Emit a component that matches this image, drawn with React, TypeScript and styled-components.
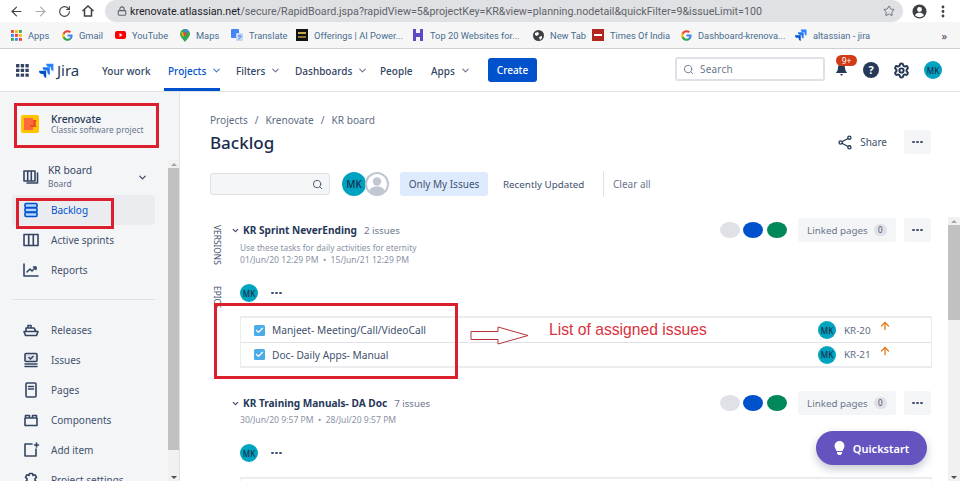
import styled, { createGlobalStyle } from "styled-components"
import { ArrowLeft, ArrowRight, RotateCw, Lock, Star, Search, ChevronDown, ArrowUp, Check, Settings } from "lucide-react"
import type { ReactNode } from "react"

const Global = createGlobalStyle`
  html, body { margin: 0; padding: 0; height: 481px; overflow: hidden; background: #fff; }
  body { font-family: "Noto Sans", "Open Sans", sans-serif; color: #42526e; }
  * { box-sizing: border-box; }
`

const Page = styled.div`
  position: relative;
  width: 960px;
  height: 481px;
  display: flex;
  flex-direction: column;
  overflow: hidden;
`

/* browser chrome */
const Toolbar = styled.div`
  height: 22px;
  display: flex;
  align-items: center;
  background: #fff;
  padding-left: 4px;
  flex: none;
`
const ToolIcon = styled.div<{ $c?: string }>`
  width: 24px;
  display: flex;
  justify-content: center;
  color: ${(p) => p.$c ?? "#3c4043"};
`
const UrlPill = styled.div`
  width: 798px;
  height: 22px;
  margin-left: 5px;
  margin-right: 4px;
  border-radius: 11px;
  background: #e0e1e4;
  display: flex;
  align-items: center;
  padding: 0 8px 0 12px;
  font-family: Roboto, sans-serif;
  font-size: 10.7px;
  color: #5f6368;
  white-space: nowrap;
  gap: 3px;
  span b { font-weight: 400; color: #202124; }
`
const UrlText = styled.span`
  flex: 1;
`
const Bookmarks = styled.div`
  height: 27px;
  flex: none;
  display: flex;
  align-items: center;
  padding-left: 11px;
  background: #f6f6f6;
  border-bottom: 1px solid #cfcfcf;
  position: relative;
`
const Mark = styled.div<{ $w: number }>`
  width: ${(p) => p.$w}px;
  display: flex;
  align-items: center;
  gap: 6px;
  font-family: Roboto, sans-serif;
  font-size: 9.3px;
  color: #476c8e;
  white-space: nowrap;
  flex: none;
  svg { flex: none; }
`
const MoreMarks = styled.div`
  margin-left: auto;
  padding-right: 13px;
  font-size: 11px;
  color: #444;
`

/* jira top nav */
const TopNav = styled.div`
  height: 43px;
  flex: none;
  display: flex;
  align-items: center;
  padding-left: 16px;
  background: #fff;
  border-bottom: 1px solid #dfe1e6;
`
const Brand = styled.div`
  display: flex;
  align-items: center;
  gap: 3px;
  width: 63px;
  margin-left: 10px;
  font-size: 15px;
  color: #253858;
`
const NavItem = styled.div<{ $w: number; $on?: boolean }>`
  width: ${(p) => p.$w}px;
  height: 42px;
  display: flex;
  align-items: center;
  gap: 5px;
  font-size: 10px;
  padding-top: 1px;
  font-weight: 500;
  color: ${(p) => (p.$on ? "#0052cc" : "#344563")};
  position: relative;
  flex: none;
  ${(p) =>
    p.$on &&
    `&::after { content: ""; position: absolute; left: -4px; width: 56px; bottom: 0; height: 3px; background: #0052cc; }`}
`
const CreateBtn = styled.div`
  width: 49px;
  height: 24px;
  background: #0052cc;
  border-radius: 3px;
  color: #fff;
  font-size: 10px;
  font-weight: 500;
  display: flex;
  align-items: center;
  justify-content: center;
`
const GlobalSearch = styled.div`
  width: 150px;
  height: 24px;
  margin-left: auto;
  margin-top: -2px;
  border: 2px solid #dfe1e6;
  border-radius: 3px;
  display: flex;
  align-items: center;
  gap: 6px;
  padding-left: 6px;
  font-size: 10px;
  color: #6b778c;
  letter-spacing: 0.2px;
`
const NavIcons = styled.div`
  width: 135px;
  height: 100%;
  display: flex;
  align-items: center;
  padding-left: 4px;
  gap: 6px;
`
const BellWrap = styled.div`
  position: relative;
  width: 24px;
  height: 24px;
  display: flex;
  align-items: center;
  justify-content: center;
`
const Badge = styled.div`
  position: absolute;
  left: 7px;
  top: -3px;
  width: 21px;
  height: 11px;
  border-radius: 6px;
  background: #d33a17;
  color: #fff;
  font-size: 8.5px;
  line-height: 11px;
  text-align: center;
`
const GearSlot = styled.div`
  width: 24px;
  display: flex;
  justify-content: center;
  color: #253858;
  margin-right: 5px;
`
const Avatar = styled.div<{ $s: number; $f: number }>`
  width: ${(p) => p.$s}px;
  height: ${(p) => p.$s}px;
  border-radius: 50%;
  background: #00a3bf;
  color: #172b4d;
  font-size: ${(p) => p.$f}px;
  font-weight: 500;
  display: flex;
  align-items: center;
  justify-content: center;
  flex: none;
`

/* body */
const Body = styled.div`
  flex: 1;
  display: flex;
  min-height: 0;
`
const Sidebar = styled.aside`
  width: 180px;
  flex: none;
  background: #f4f5f7;
  border-right: 1px solid #dfe1e6;
  padding: 20px 0 0 12px;
  position: relative;
  overflow: hidden;
`
const SideBar = styled.div`
  position: absolute;
  right: 0;
  top: 68px;
  bottom: 0;
  width: 11px;
  background: #f1f1f1;
  display: flex;
  flex-direction: column;
  align-items: center;
`
const ScrollArrow = styled.div<{ $down?: boolean }>`
  width: 100%;
  height: 8px;
  flex: none;
  display: flex;
  align-items: center;
  justify-content: center;
  &::before {
    content: "";
    border-left: 3px solid transparent;
    border-right: 3px solid transparent;
    ${(p) => (p.$down ? "border-top: 3px solid #505050;" : "border-bottom: 3px solid #a3a3a3;")}
  }
`
const Thumb = styled.div<{ $h: number }>`
  width: 100%;
  height: ${(p) => p.$h}px;
  flex: none;
  background: #c1c1c1;
`
const ScrollGap = styled.div`
  flex: 1;
`
const ProjectHead = styled.div`
  display: flex;
  align-items: center;
  gap: 12px;
  padding-left: 9px;
  height: 24px;
`
const ProjectLogo = styled.div`
  width: 18px;
  height: 18px;
  border-radius: 2px;
  background: #ffc400;
  display: flex;
  align-items: center;
  justify-content: center;
`
const ProjectName = styled.div`
  font-size: 10.3px;
  font-weight: 500;
  color: #253858;
  line-height: 12px;
`
const ProjectKind = styled.div`
  font-size: 8.4px;
  color: #6b778c;
  line-height: 10px;
`
const BoardRow = styled.div`
  display: flex;
  align-items: center;
  height: 32px;
  margin-top: 25px;
  padding-left: 10px;
  width: 143px;
  gap: 8px;
`
const BoardText = styled.div`
  flex: 1;
  line-height: 13px;
  font-size: 10.3px;
  color: #344563;
  small { display: block; font-size: 8.4px; color: #5e6c84; }
`
const BoardChevron = styled.div`
  display: flex;
  margin-right: 7px;
  color: #344563;
`
const SideItem = styled.div<{ $on?: boolean }>`
  width: 143px;
  height: 30px;
  display: flex;
  align-items: center;
  gap: 11px;
  padding-left: 10px;
  border-radius: 3px;
  font-size: 10px;
  background: ${(p) => (p.$on ? "#ebecf0" : "transparent")};
  color: ${(p) => (p.$on ? "#0052cc" : "#42526e")};
  svg { flex: none; }
`
const SideList = styled.div`
  margin-top: 2px;
`
const SideRule = styled.div`
  width: 143px;
  height: 1px;
  background: #dfe1e6;
  margin: 14px 0 15px;
`

const Main = styled.main`
  flex: 1;
  min-width: 0;
  padding: 20px 17px 0 30px;
  background: #fff;
  overflow: hidden;
`
const Crumbs = styled.div`
  display: flex;
  gap: 7px;
  font-size: 10.1px;
  color: #5e6c84;
  height: 15px;
  align-items: center;
`
const TitleRow = styled.div`
  display: flex;
  align-items: center;
  height: 30px;
`
const Title = styled.h1`
  margin: 0;
  font-size: 17px;
  font-weight: 500;
  color: #172b4d;
  flex: 1;
`
const ShareBtn = styled.div`
  display: flex;
  align-items: center;
  gap: 8px;
  font-size: 10px;
  color: #42526e;
  margin-right: 17px;
`
const MoreBtn = styled.div`
  width: 27px;
  height: 24px;
  border-radius: 3px;
  background: #f4f5f7;
  display: flex;
  align-items: center;
  justify-content: center;
  gap: 1.5px;
  flex: none;
  i { width: 2.6px; height: 2.6px; border-radius: 50%; background: #42526e; display: block; }
`
const Dots = styled.div`
  display: flex;
  gap: 1.5px;
  margin-left: 13px;
  i { width: 2.6px; height: 2.6px; border-radius: 50%; background: #42526e; display: block; }
`
const FilterRow = styled.div`
  display: flex;
  align-items: center;
  height: 24px;
  margin-top: 15px;
`
const FilterInput = styled.div`
  width: 120px;
  height: 22px;
  background: #f4f5f7;
  border: 1px solid #dfe1e6;
  border-radius: 3px;
  display: flex;
  align-items: center;
  justify-content: flex-end;
  padding-right: 6px;
  color: #42526e;
`
const People = styled.div`
  display: flex;
  margin-left: 12px;
  width: 58px;
`
const GreyPerson = styled.div`
  width: 24px;
  height: 24px;
  margin-left: -1px;
  border-radius: 50%;
  background: #c1c7d0;
  overflow: hidden;
  flex: none;
`
const QuickOn = styled.div`
  width: 88px;
  height: 24px;
  background: #deebff;
  border-radius: 3px;
  font-size: 10px;
  color: #42526e;
  display: flex;
  align-items: center;
  justify-content: center;
`
const QuickOff = styled.div`
  margin-left: 15px;
  font-size: 9.8px;
  color: #42526e;
  width: 100px;
`
const ClearAll = styled.div`
  border-left: 1px solid #dfe1e6;
  height: 26px;
  padding-left: 9px;
  display: flex;
  align-items: center;
  font-size: 10px;
  color: #6b778c;
`
const Sprint = styled.section<{ $top: number }>`
  display: flex;
  margin-top: ${(p) => p.$top}px;
`
const Rail = styled.div`
  width: 20px;
  flex: none;
`
const RailText = styled.div<{ $mt: number }>`
  writing-mode: vertical-rl;
  font-size: 8.4px;
  color: #42526e;
  margin-top: ${(p) => p.$mt}px;
  height: 41px;
  margin-left: 2px;
`
const SprintBody = styled.div`
  flex: 1;
  min-width: 0;
`
const SprintHead = styled.div<{ $t?: number }>`
  display: flex;
  align-items: center;
  height: 24px;
  padding-left: 1px;
  margin-top: ${(p) => p.$t ?? 0}px;
`
const SprintName = styled.div`
  font-size: 10.1px;
  font-weight: 700;
  color: #253858;
  margin-left: 3px;
  white-space: nowrap;
`
const IssueCount = styled.div`
  font-size: 9.7px;
  color: #6b778c;
  margin-left: 7px;
  flex: 1;
`
const Ellipse = styled.div<{ $c: string }>`
  width: 20px;
  height: 16px;
  border-radius: 50%;
  background: ${(p) => p.$c};
  margin-right: 3.5px;
  flex: none;
`
const Linked = styled.div`
  width: 98px;
  height: 24px;
  margin: 0 8px 0 8px;
  background: #f4f5f7;
  border-radius: 3px;
  display: flex;
  align-items: center;
  gap: 6px;
  padding-left: 9px;
  font-size: 9.8px;
  color: #6b778c;
  flex: none;
`
const Count = styled.div`
  width: 13px;
  height: 12px;
  border-radius: 6px;
  background: #dfe1e6;
  font-size: 8px;
  line-height: 12px;
  text-align: center;
  color: #42526e;
`
const SprintMeta = styled.div<{ $t?: number; $s?: number }>`
  font-size: ${(p) => p.$s ?? 8.6}px;
  line-height: 13px;
  color: #8993a4;
  padding-left: 10px;
  margin-top: ${(p) => p.$t ?? 0}px;
  white-space: nowrap;
`
const Assignees = styled.div<{ $t: number }>`
  display: flex;
  align-items: center;
  margin-top: ${(p) => p.$t}px;
  padding-left: 10px;
`
const IssueList = styled.div<{ $t: number }>`
  margin: ${(p) => p.$t}px 0 0 10px;
  width: 692px;
  border: 1px solid #ebecf0;
  border-top-width: 2px;
  border-bottom-width: 2px;
  flex: none;
`
const IssueRow = styled.div`
  height: 24px;
  display: flex;
  align-items: center;
  padding-left: 13px;
  font-size: 10.2px;
  color: #42526e;
  & + & { border-top: 1px solid #dfe1e6; }
`
const CheckBox = styled.div`
  width: 11px;
  height: 11px;
  border-radius: 1.5px;
  background: #4bade8;
  display: flex;
  align-items: center;
  justify-content: center;
  color: #fff;
  margin-right: 7px;
`
const Summary = styled.div`
  flex: 1;
`
const IssueKey = styled.div`
  width: 35px;
  margin-left: 8px;
  font-size: 9.8px;
  color: #5e6c84;
`
const IssueEnd = styled.div`
  width: 52px;
  height: 16px;
  margin-bottom: 4px;
  color: #e07b1a;
`
const MainScroll = styled.div`
  width: 12px;
  flex: none;
  background: #f1f1f1;
  margin-top: 125px;
  display: flex;
  flex-direction: column;
`

/* overlays */
const RedBox = styled.div<{ $x: number; $y: number; $w: number; $h: number }>`
  position: absolute;
  left: ${(p) => p.$x}px;
  top: ${(p) => p.$y}px;
  width: ${(p) => p.$w}px;
  height: ${(p) => p.$h}px;
  border: 3px solid #d9202c;
  pointer-events: none;
`
const Callout = styled.div`
  position: absolute;
  left: 549px;
  top: 320px;
  font-family: "Liberation Sans", Arial, sans-serif;
  font-size: 15.7px;
  line-height: 20px;
  color: #d9323c;
  white-space: nowrap;
`
const CalloutArrow = styled.svg`
  position: absolute;
  left: 470px;
  top: 326px;
`
const Quickstart = styled.div`
  position: absolute;
  left: 816px;
  top: 431px;
  width: 111px;
  height: 34px;
  border-radius: 17px;
  background: #6554c0;
  color: #fff;
  font-size: 11px;
  font-weight: 600;
  display: flex;
  align-items: center;
  justify-content: center;
  gap: 8px;
  box-shadow: 0 4px 8px rgba(9, 30, 66, 0.25);
`

const GoogleG = () => (
  <svg width="11" height="11" viewBox="0 0 24 24">
    <path fill="#4285f4" d="M23 12.3c0-.8-.1-1.6-.2-2.3H12v4.400h6.200a5.300 5.300 0 0 1-2.300 3.500v2.900h3.700c2.200-2 3.400-5 3.400-8.500z" />
    <path fill="#34a853" d="M12 23.500c3.100 0 5.700-1 7.600-2.800l-3.700-2.900c-1 .7-2.300 1.100-3.900 1.100-3 0-5.500-2-6.400-4.700H1.800v3c1.900 3.800 5.800 6.300 10.200 6.300z" />
    <path fill="#fbbc05" d="M5.600 14.200a6.900 6.900 0 0 1 0-4.400v-3H1.800a11.500 11.500 0 0 0 0 10.400z" />
    <path fill="#ea4335" d="M12 5.100c1.700 0 3.200.6 4.400 1.700l3.300-3.300A11.500 11.500 0 0 0 1.800 6.800l3.800 3C6.500 7.100 9 5.100 12 5.100z" />
  </svg>
)

const JiraMark = ({ size }: { size: number }) => (
  <svg width={size} height={size} viewBox="0 0 24 24">
    <path fill="#2684ff" d="M23 1H11.500a5.200 5.200 0 0 0 5.200 5.200h2.100v2a5.200 5.200 0 0 0 4.200 5.100z" />
    <path fill="#1f78f0" d="M17.300 6.700H5.800a5.200 5.200 0 0 0 5.200 5.200h2.100v2a5.200 5.200 0 0 0 4.200 5.100z" />
    <path fill="#0052cc" d="M11.500 12.400H0a5.200 5.200 0 0 0 5.200 5.200h2.100v2a5.200 5.200 0 0 0 4.200 4.400z" />
  </svg>
)

const AppsDots = ({ multi }: { multi?: boolean }) => {
  const colors = ["#ea4335", "#fbbc05", "#34a853", "#4285f4", "#ea4335", "#fbbc05", "#34a853", "#4285f4", "#ea4335"]
  return (
    <svg width={multi ? 11 : 13} height={multi ? 11 : 13} viewBox="0 0 13 13">
      {colors.map((c, i) => (
        <rect key={i} x={(i % 3) * 4.7} y={Math.floor(i / 3) * 4.7} width="3.4" height="3.4" rx={multi ? 0 : 0.6} fill={multi ? c : "#344563"} />
      ))}
    </svg>
  )
}

const Line = ({ children, w = 18, h = 18, c = "#344563" }: { children: ReactNode; w?: number; h?: number; c?: string }) => (
  <svg width={w} height={h} viewBox="0 0 18 18" fill="none" stroke={c} strokeWidth="1.6" strokeLinejoin="round" strokeLinecap="round">
    {children}
  </svg>
)

const nav = [
  { label: "Your work", w: 66 },
  { label: "Projects", w: 68, on: true, chev: true },
  { label: "Filters", w: 59, chev: true },
  { label: "Dashboards", w: 85, chev: true },
  { label: "People", w: 51 },
  { label: "Apps", w: 57, chev: true },
]

const More = () => (
  <MoreBtn>
    <i />
    <i />
    <i />
  </MoreBtn>
)

const SprintRight = () => (
  <>
    <Ellipse $c="#dfe1e6" />
    <Ellipse $c="#0052cc" />
    <Ellipse $c="#00875a" />
    <Linked>
      Linked pages <Count>0</Count>
    </Linked>
    <More />
  </>
)

export default function App() {
  return (
    <Page>
      <Global />
      <Toolbar>
        <ToolIcon><ArrowLeft size={15} strokeWidth={1.8} /></ToolIcon>
        <ToolIcon $c="#a8abaf"><ArrowRight size={15} strokeWidth={1.8} /></ToolIcon>
        <ToolIcon><RotateCw size={13} strokeWidth={2} /></ToolIcon>
        <ToolIcon>
          <svg width="14" height="14" viewBox="0 0 14 14" fill="none" stroke="#3c4043" strokeWidth="1.5">
            <path d="M1.5 7 7 2l5.5 5M3.5 6v6h7V6" />
          </svg>
        </ToolIcon>
        <UrlPill>
          <Lock size={10} strokeWidth={2.6} />
          <UrlText>
            <b>krenovate.atlassian.net</b>/secure/RapidBoard.jspa?rapidView=5&amp;projectKey=KR&amp;view=planning.nodetail&amp;quickFilter=9&amp;issueLimit=100
          </UrlText>
          <Star size={12} strokeWidth={1.8} />
        </UrlPill>
        <ToolIcon>
          <svg width="15" height="15" viewBox="0 0 15 15">
            <circle cx="7.5" cy="7.5" r="7" fill="#3c4043" />
            <circle cx="7.5" cy="5.5" r="2.4" fill="#fff" />
            <path d="M3 11.200c1-1.800 2.800-2.400 4.500-2.400s3.500.6 4.500 2.400a6 6 0 0 1-9 0z" fill="#fff" />
          </svg>
        </ToolIcon>
        <ToolIcon>
          <svg width="4" height="13" viewBox="0 0 4 13" fill="#3c4043">
            <circle cx="2" cy="2" r="1.4" />
            <circle cx="2" cy="6.5" r="1.4" />
            <circle cx="2" cy="11" r="1.4" />
          </svg>
        </ToolIcon>
      </Toolbar>
      <Bookmarks>
        <Mark $w={51}><AppsDots multi /> Apps</Mark>
        <Mark $w={53}><GoogleG /> Gmail</Mark>
        <Mark $w={65}>
          <svg width="11" height="8" viewBox="0 0 11 8"><rect width="11" height="8" rx="2" fill="#f00" /><path d="M4.500 2v4l3-2z" fill="#fff" /></svg>
          YouTube
        </Mark>
        <Mark $w={51}>
          <svg width="10" height="13" viewBox="0 0 10 13"><path d="M5 0a5 5 0 0 1 5 5c0 3-3 5-5 8-2-3-5-5-5-8a5 5 0 0 1 5-5z" fill="#34a853" /><path d="M1 2.500 5 5 3 8z" fill="#fbbc05" /><path d="M5 0a5 5 0 0 1 4 2L5 5z" fill="#4285f4" /><circle cx="5" cy="5" r="1.700" fill="#ea4335" /></svg>
          Maps
        </Mark>
        <Mark $w={65}>
          <svg width="12" height="12" viewBox="0 0 12 12"><rect width="8" height="9" rx="1" fill="#4285f4" /><rect x="5" y="4" width="7" height="8" rx="1" fill="#c6d7f5" /><path d="M7 7h3.500M9 6v1M7.500 10.500 10 7.500" stroke="#4285f4" fill="none" /></svg>
          Translate
        </Mark>
        <Mark $w={116}>
          <svg width="12" height="12" viewBox="0 0 12 12"><rect width="12" height="12" fill="#111" /><rect x="2" y="3" width="8" height="2" fill="#c8a94a" /><rect x="2" y="7" width="8" height="2" fill="#8a7a3a" /></svg>
          Offerings | AI Power...
        </Mark>
        <Mark $w={121}>
          <svg width="12" height="12" viewBox="0 0 12 12" fill="#5b4cc4"><path d="M1 0h3v4h4V0h3v12H8V8H4v4H1z" /></svg>
          Top 20 Websites for...
        </Mark>
        <Mark $w={59}>
          <svg width="11" height="11" viewBox="0 0 11 11"><circle cx="5.500" cy="5.500" r="5.500" fill="#3c4043" /><path d="M2 3l3-1 1 2-2 2-2-1zM6 7l3-1v2l-2 2z" fill="#fff" /></svg>
          New Tab
        </Mark>
        <Mark $w={89}>
          <svg width="12" height="12" viewBox="0 0 12 12"><rect width="12" height="12" fill="#b3261e" /><rect x="2" y="5" width="8" height="2" fill="#fff" /></svg>
          Times Of India
        </Mark>
        <Mark $w={114}><GoogleG /> Dashboard-krenova...</Mark>
        <Mark $w={80}><JiraMark size={12} /> altassian - jira</Mark>
        <MoreMarks>»</MoreMarks>
      </Bookmarks>
      <TopNav>
        <AppsDots />
        <Brand><JiraMark size={15} /> Jira</Brand>
        {nav.map((n) => (
          <NavItem key={n.label} $w={n.w} $on={n.on}>
            {n.label}
            {n.chev && <ChevronDown size={11} strokeWidth={2.4} color={n.on ? "#4c7cc4" : "#6b778c"} />}
          </NavItem>
        ))}
        <CreateBtn>Create</CreateBtn>
        <GlobalSearch><Search size={11} strokeWidth={2} /> Search</GlobalSearch>
        <NavIcons>
          <BellWrap>
            <svg width="13" height="14" viewBox="0 0 13 14" fill="#253858"><path d="M6.500 1C4 1 3 3 3 5c0 3-2 4-2 5h11c0-1-2-2-2-5 0-2-1-4-3.500-4zM5 11h3l-1.500 2z" /></svg>
            <Badge>9+</Badge>
          </BellWrap>
          <svg width="24" height="24" viewBox="0 0 24 24">
            <circle cx="12" cy="12" r="8" fill="#253858" />
            <text x="12" y="15.500" fontSize="11" fontWeight="700" fill="#fff" textAnchor="middle" fontFamily="Noto Sans">?</text>
          </svg>
          <GearSlot><Settings size={17} strokeWidth={2.8} /></GearSlot>
          <Avatar $s={18} $f={8}>MK</Avatar>
        </NavIcons>
      </TopNav>
      <Body>
        <Sidebar>
          <ProjectHead>
            <ProjectLogo>
              <svg width="14" height="14" viewBox="0 0 14 14"><path d="M1 1h9v12H1z" fill="#ff6a3d" /><path d="M10 3h3.500l-1 3.500 1 3.500H7V8h3z" fill="#e8501e" /></svg>
            </ProjectLogo>
            <div>
              <ProjectName>Krenovate</ProjectName>
              <ProjectKind>Classic software project</ProjectKind>
            </div>
          </ProjectHead>
          <BoardRow>
            <Line>
              <path d="M2 3h11v10H2zM5.700 3v10M9.300 3v10" />
              <path d="M15.500 5v10H5" />
            </Line>
            <BoardText>KR board<small>Board</small></BoardText>
            <BoardChevron><ChevronDown size={11} strokeWidth={2.6} /></BoardChevron>
          </BoardRow>
          <SideList>
            <SideItem $on>
              <Line c="#0052cc">
                <rect x="3" y="2.500" width="12" height="4" rx="1" fill="#b3d4ff" />
                <rect x="3" y="7" width="12" height="4" rx="1" fill="#b3d4ff" />
                <rect x="3" y="11.500" width="12" height="4" rx="1" fill="#b3d4ff" />
              </Line>
              Backlog
            </SideItem>
            <SideItem>
              <Line><path d="M2 3.500h14v11H2zM6.700 3.500v11M11.300 3.500v11" /></Line>
              Active sprints
            </SideItem>
            <SideItem>
              <Line><path d="M2 3v12h14M5 11l3-3 2 2 4-4M11.500 6H14v2.500" /></Line>
              Reports
            </SideItem>
            <SideRule />
            <SideItem>
              <Line><path d="M2 10.500h14l-1.500 4h-11zM4 10.500V7h8l2 3.500M6 7V4.500h3V7" /></Line>
              Releases
            </SideItem>
            <SideItem>
              <Line><rect x="3" y="2.500" width="12" height="8" rx="1" fill="#dfe1e6" /><path d="M7 6.500l1.500 1.500 2.500-2.500M3 13h12M3 15.500h12" /></Line>
              Issues
            </SideItem>
            <SideItem>
              <Line><rect x="4" y="2" width="10" height="14" rx="1" /><path d="M6.500 5.500h5M6.500 8h5" /></Line>
              Pages
            </SideItem>
            <SideItem>
              <Line><path d="M3 7h12v7.500H3zM3.500 7V4.500h4V7M10.500 7V4.500h4V7" /></Line>
              Components
            </SideItem>
            <SideItem>
              <Line><path d="M10 3H3v12h11V8M14.500 2v4M12.500 4h4" /></Line>
              Add item
            </SideItem>
            <SideItem>
              <Line><path d="M7.500 2.500h3l.5 2 2-.8 1.500 2.600-1.500 1.400v1.600l1.500 1.400-1.500 2.600-2-.8-.5 2h-3l-.5-2-2 .8-1.500-2.600 1.500-1.400V7.700L3.500 6.300 5 3.700l2 .8z" /></Line>
              Project settings
            </SideItem>
          </SideList>
          <SideBar>
            <ScrollArrow />
            <Thumb $h={282} />
            <ScrollGap />
            <ScrollArrow $down />
          </SideBar>
        </Sidebar>
        <Main>
          <Crumbs>
            <span>Projects</span><span>/</span><span>Krenovate</span><span>/</span><span>KR board</span>
          </Crumbs>
          <TitleRow>
            <Title>Backlog</Title>
            <ShareBtn>
              <svg width="14" height="15" viewBox="0 0 16 16" fill="none" stroke="#253858" strokeWidth="1.500">
                <circle cx="3" cy="8" r="1.800" /><circle cx="13" cy="2.500" r="1.800" /><circle cx="13" cy="13.500" r="1.800" />
                <path d="M4.600 7.100l6.800-3.700M4.600 8.900l6.800 3.700" />
              </svg>
              Share
            </ShareBtn>
            <More />
          </TitleRow>
          <FilterRow>
            <FilterInput><Search size={11} strokeWidth={2} /></FilterInput>
            <People>
              <Avatar $s={24} $f={10}>MK</Avatar>
              <GreyPerson>
                <svg width="24" height="24" viewBox="0 0 24 24">
                  <circle cx="12" cy="12" r="10" fill="#fff" />
                  <circle cx="12" cy="9.500" r="4.200" fill="#c1c7d0" />
                  <path d="M4.500 19c1-3.500 4-4.500 7.500-4.500s6.500 1 7.500 4.500a10 10 0 0 1-15 0z" fill="#c1c7d0" />
                </svg>
              </GreyPerson>
            </People>
            <QuickOn>Only My Issues</QuickOn>
            <QuickOff>Recently Updated</QuickOff>
            <ClearAll>Clear all</ClearAll>
          </FilterRow>
          <Sprint $top={22}>
            <Rail>
              <RailText $mt={7}>VERSIONS</RailText>
              <RailText $mt={20}>EPICS</RailText>
            </Rail>
            <SprintBody>
              <SprintHead>
                <ChevronDown size={9} strokeWidth={3} color="#344563" />
                <SprintName>KR Sprint NeverEnding</SprintName>
                <IssueCount>2 issues</IssueCount>
                <SprintRight />
              </SprintHead>
              <SprintMeta $t={-1} $s={8.3}>Use these tasks for daily activities for eternity</SprintMeta>
              <SprintMeta>01/Jun/20 12:29 PM &nbsp;•&nbsp; 15/Jun/21 12:29 PM</SprintMeta>
              <Assignees $t={17}>
                <Avatar $s={18} $f={8}>MK</Avatar>
                <Dots><i /><i /><i /></Dots>
              </Assignees>
              <IssueList $t={14}>
                <IssueRow>
                  <CheckBox><Check size={9} strokeWidth={3.500} /></CheckBox>
                  <Summary>Manjeet- Meeting/Call/VideoCall</Summary>
                  <Avatar $s={18} $f={8}>MK</Avatar>
                  <IssueKey>KR-20</IssueKey>
                  <IssueEnd><ArrowUp size={12} strokeWidth={2.600} /></IssueEnd>
                </IssueRow>
                <IssueRow>
                  <CheckBox><Check size={9} strokeWidth={3.500} /></CheckBox>
                  <Summary>Doc- Daily Apps- Manual</Summary>
                  <Avatar $s={18} $f={8}>MK</Avatar>
                  <IssueKey>KR-21</IssueKey>
                  <IssueEnd><ArrowUp size={12} strokeWidth={2.600} /></IssueEnd>
                </IssueRow>
              </IssueList>
              <SprintHead $t={23}>
                <ChevronDown size={9} strokeWidth={3} color="#344563" />
                <SprintName>KR Training Manuals- DA Doc</SprintName>
                <IssueCount>7 issues</IssueCount>
                <SprintRight />
              </SprintHead>
              <SprintMeta $t={-1}>30/Jun/20 9:57 PM &nbsp;•&nbsp; 28/Jul/20 9:57 PM</SprintMeta>
              <Assignees $t={17}>
                <Avatar $s={18} $f={8}>MK</Avatar>
                <Dots><i /><i /><i /></Dots>
              </Assignees>
              <IssueList $t={15}>
                <IssueRow />
              </IssueList>
            </SprintBody>
          </Sprint>
        </Main>
        <MainScroll>
          <ScrollArrow />
          <Thumb $h={95} />
          <ScrollGap />
          <ScrollArrow $down />
        </MainScroll>
      </Body>
      <RedBox $x={14} $y={103} $w={145} $h={45} />
      <RedBox $x={16} $y={198} $w={98} $h={31} />
      <RedBox $x={214} $y={303} $w={244} $h={76} />
      <CalloutArrow width="60" height="20" viewBox="0 0 60 20" fill="#fff" stroke="#b8323a" strokeWidth="1">
        <path d="M1 5.500h27V1l30 8.500-30 8.500v-4.500H1z" />
      </CalloutArrow>
      <Callout>List of assigned issues</Callout>
      <Quickstart>
        <svg width="11" height="14" viewBox="0 0 11 14" fill="#fff">
          <path d="M5.500 0A5 5 0 0 1 10.500 5c0 2-1.500 3-2 5h-6c-.5-2-2-3-2-5a5 5 0 0 1 5-5zM3 11h5v1.500L6.500 14h-2L3 12.500z" />
        </svg>
        Quickstart
      </Quickstart>
    </Page>
  )
}
